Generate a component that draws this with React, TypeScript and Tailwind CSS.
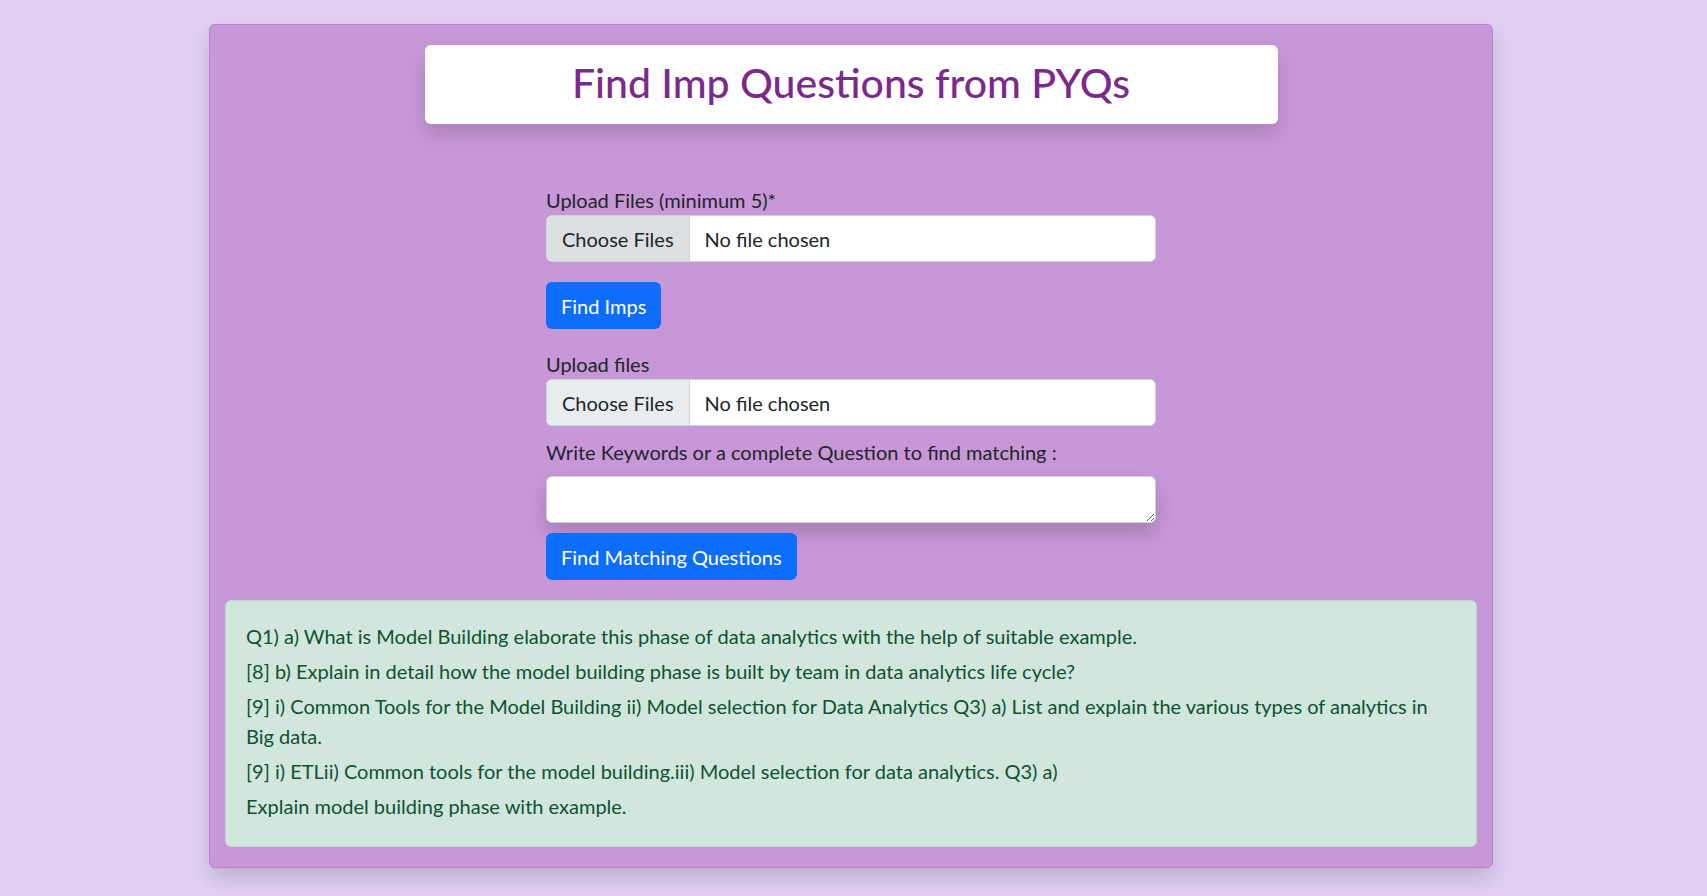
import React from "react";

const questions = [
  "Q1) a) What is Model Building elaborate this phase of data analytics with the help of suitable example.",
  "[8] b) Explain in detail how the model building phase is built by team in data analytics life cycle?",
  "[9] i) Common Tools for the Model Building ii) Model selection for Data Analytics Q3) a) List and explain the various types of analytics in Big data.",
  "[9] i) ETLii) Common tools for the model building.iii) Model selection for data analytics. Q3) a)",
  "Explain model building phase with example.",
];

const FilePicker = ({ hover }: { hover?: boolean }) => (
  <div className="flex h-[47px] w-full overflow-hidden rounded-md border border-[#ced4da] bg-white text-[20px] text-[#212529]">
    <span
      className={
        hover
          ? "flex items-center border-r border-[#ced4da] bg-[#dde0e3] px-[15px]"
          : "flex items-center border-r border-[#ced4da] bg-[#e9ecef] px-[15px]"
      }
    >
      Choose Files
    </span>
    <span className="flex items-center px-[15px]">No file chosen</span>
  </div>
);

export default function App() {
  return (
    <div className="min-h-screen bg-[#e0cff3] pt-6 pr-[5px] font-['Lato',sans-serif] text-[20px] leading-[30px] text-[#212529]">
      <div className="mx-auto w-[1284px] rounded-md border border-[#b783c9] bg-[#c897d8] px-[15px] pt-5 pb-5 shadow-[0_10px_20px_rgba(0,0,0,0.15)]">
        <div className="mx-auto flex h-[79px] w-[853px] items-center justify-center rounded-md bg-white pb-1 shadow-[0_10px_20px_rgba(0,0,0,0.15)]">
          <h1 className="text-[41px] font-medium leading-[48px] text-[#7b2a8b]">
            Find Imp Questions from PYQs
          </h1>
        </div>

        <form className="mx-auto mt-[61px] w-[610px]">
          <label className="block">Upload Files (minimum 5)*</label>
          <FilePicker hover />

          <button
            type="button"
            className="mt-5 h-[47px] rounded-md bg-[#0d6efd] px-[15px] text-white"
          >
            Find Imps
          </button>

          <label className="mt-5 block">Upload files</label>
          <FilePicker />

          <label className="mt-[11px] mb-[9px] block">
            Write Keywords or a complete Question to find matching :
          </label>
          <textarea className="block h-[47px] w-full rounded-md border border-[#ced4da] bg-white shadow-[0_10px_20px_rgba(0,0,0,0.18)] outline-none" />

          <button
            type="button"
            className="mt-[10px] h-[47px] rounded-md bg-[#0d6efd] px-[15px] text-white"
          >
            Find Matching Questions
          </button>
        </form>

        <div className="mt-5 rounded-md border border-[#badbcc] bg-[#d1e7dd] px-5 pt-5 pb-5 text-[#0f5132]">
          {questions.map((q) => (
            <p key={q} className="mb-[5px]">
              {q}
            </p>
          ))}
        </div>
      </div>
    </div>
  );
}
